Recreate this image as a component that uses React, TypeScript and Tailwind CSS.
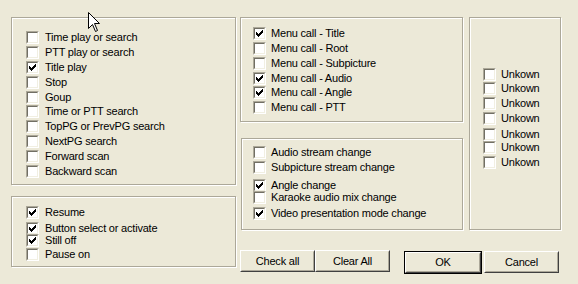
import React from 'react';

type Item = { label: string; checked?: boolean; h: string };

const CheckMark: React.FC = () => (
  <svg width="7" height="7" viewBox="0 0 7 7" shapeRendering="crispEdges" className="absolute left-[1px] top-[1px]">
    <rect x="6" y="0" width="1" height="1" fill="#000" />
    <rect x="5" y="1" width="2" height="1" fill="#000" />
    <rect x="0" y="2" width="1" height="1" fill="#000" />
    <rect x="4" y="2" width="3" height="1" fill="#000" />
    <rect x="0" y="3" width="2" height="1" fill="#000" />
    <rect x="3" y="3" width="3" height="1" fill="#000" />
    <rect x="0" y="4" width="5" height="1" fill="#000" />
    <rect x="1" y="5" width="3" height="1" fill="#000" />
    <rect x="2" y="6" width="1" height="1" fill="#000" />
  </svg>
);

const CheckBox: React.FC<{ checked?: boolean }> = ({ checked }) => (
  <div className="w-[13px] h-[13px] shrink-0 border border-[#ACA899] border-b-white border-r-white">
    <div className="relative w-full h-full border border-[#716F64] border-b-[#F1EFE2] border-r-[#F1EFE2] bg-white">
      {checked && <CheckMark />}
    </div>
  </div>
);

const CheckList: React.FC<{ items: Item[]; gap: string }> = ({ items, gap }) => (
  <div className="flex flex-col">
    {items.map((it, i) => (
      <div key={i} className={`${it.h} flex items-start ${gap}`}>
        <CheckBox checked={it.checked} />
        <span className="leading-[13px] whitespace-nowrap">{it.label}</span>
      </div>
    ))}
  </div>
);

const GroupBox: React.FC<{ className: string; children: React.ReactNode }> = ({ className, children }) => (
  <div className={`border border-[#ACA899] shadow-[inset_1px_1px_0_#fff,1px_1px_0_#fff] ${className}`}>{children}</div>
);

const Button: React.FC<{ label: string; isDefault?: boolean; className?: string }> = ({ label, isDefault, className = '' }) => (
  <div className={`h-[22px] ${isDefault ? 'border border-black' : ''} ${className}`}>
    <div className="h-full w-full border border-white border-b-[#404040] border-r-[#404040]">
      <div className="h-full w-full border border-transparent border-b-[#ACA899] border-r-[#ACA899] flex items-center justify-center">
        {label}
      </div>
    </div>
  </div>
);

const playItems: Item[] = [
  { label: 'Time play or search', h: 'h-[15px]' },
  { label: 'PTT play or search', h: 'h-[15px]' },
  { label: 'Title play', checked: true, h: 'h-[15px]' },
  { label: 'Stop', h: 'h-[15px]' },
  { label: 'Goup', h: 'h-[14px]' },
  { label: 'Time or PTT search', h: 'h-[15px]' },
  { label: 'TopPG or PrevPG search', h: 'h-[15px]' },
  { label: 'NextPG search', h: 'h-[15px]' },
  { label: 'Forward scan', h: 'h-[15px]' },
  { label: 'Backward scan', h: 'h-[15px]' },
];

const resumeItems: Item[] = [
  { label: 'Resume', checked: true, h: 'h-[16px]' },
  { label: 'Button select or activate', checked: true, h: 'h-[12px]' },
  { label: 'Still off', checked: true, h: 'h-[14px]' },
  { label: 'Pause on', h: 'h-[14px]' },
];

const menuItems: Item[] = [
  { label: 'Menu call - Title', checked: true, h: 'h-[15px]' },
  { label: 'Menu call - Root', h: 'h-[15px]' },
  { label: 'Menu call - Subpicture', h: 'h-[15px]' },
  { label: 'Menu call - Audio', checked: true, h: 'h-[14px]' },
  { label: 'Menu call - Angle', checked: true, h: 'h-[15px]' },
  { label: 'Menu call - PTT', h: 'h-[15px]' },
];

const streamItems: Item[] = [
  { label: 'Audio stream change', h: 'h-[15px]' },
  { label: 'Subpicture stream change', h: 'h-[18px]' },
  { label: 'Angle change', checked: true, h: 'h-[12px]' },
  { label: 'Karaoke audio mix change', h: 'h-[16px]' },
  { label: 'Video presentation mode change', checked: true, h: 'h-[15px]' },
];

const unknownItems: Item[] = [
  { label: 'Unkown', h: 'h-[14px]' },
  { label: 'Unkown', h: 'h-[15px]' },
  { label: 'Unkown', h: 'h-[15px]' },
  { label: 'Unkown', h: 'h-[16px]' },
  { label: 'Unkown', h: 'h-[13px]' },
  { label: 'Unkown', h: 'h-[15px]' },
  { label: 'Unkown', h: 'h-[15px]' },
];

const Cursor: React.FC = () => (
  <svg width="13" height="21" viewBox="0 0 13 21" className="absolute left-[88px] top-[12px]">
    <polygon
      points="0.5,0.5 0.5,16.5 4.5,12.5 7.5,19.5 9.5,18.5 6.5,11.5 11.5,11.5"
      fill="#fff"
      stroke="#000"
      strokeWidth="1"
    />
  </svg>
);

export default function App() {
  return (
    <div
      className="relative w-[578px] h-[284px] bg-[#ECE9D8] text-black text-[11px] tracking-[-0.2px] overflow-hidden flex pl-[11px] pt-[17px]"
      style={{ fontFamily: '"Liberation Sans", Arial, sans-serif' }}
    >
      {/* Left column */}
      <div className="w-[225px] flex flex-col">
        <GroupBox className="h-[168px] pl-[14px] pt-[13px]">
          <CheckList items={playItems} gap="gap-[6px]" />
        </GroupBox>
        <GroupBox className="mt-[11px] h-[71px] pl-[14px] pt-[9px]">
          <CheckList items={resumeItems} gap="gap-[6px]" />
        </GroupBox>
      </div>

      {/* Right part */}
      <div className="ml-[4px] flex flex-col">
        <div className="flex">
          <div className="w-[223px] flex flex-col">
            <GroupBox className="h-[105px] pl-[12px] pt-[9px]">
              <CheckList items={menuItems} gap="gap-[5px]" />
            </GroupBox>
            <GroupBox className="mt-[16px] ml-[1px] h-[92px] pl-[11px] pt-[7px]">
              <CheckList items={streamItems} gap="gap-[5px]" />
            </GroupBox>
          </div>
          <GroupBox className="ml-[6px] w-[92px] h-[213px] pl-[13px] pt-[50px]">
            <CheckList items={unknownItems} gap="gap-[5px]" />
          </GroupBox>
        </div>
        <div className="mt-[20px] flex items-start">
          <Button label="Check all" className="w-[75px]" />
          <Button label="Clear All" className="w-[75px]" />
          <Button label="OK" isDefault className="ml-[14px] w-[78px] h-[23px] mt-[1px]" />
          <Button label="Cancel" className="ml-[2px] w-[75px] mt-[1px]" />
        </div>
      </div>

      <Cursor />
    </div>
  );
}
